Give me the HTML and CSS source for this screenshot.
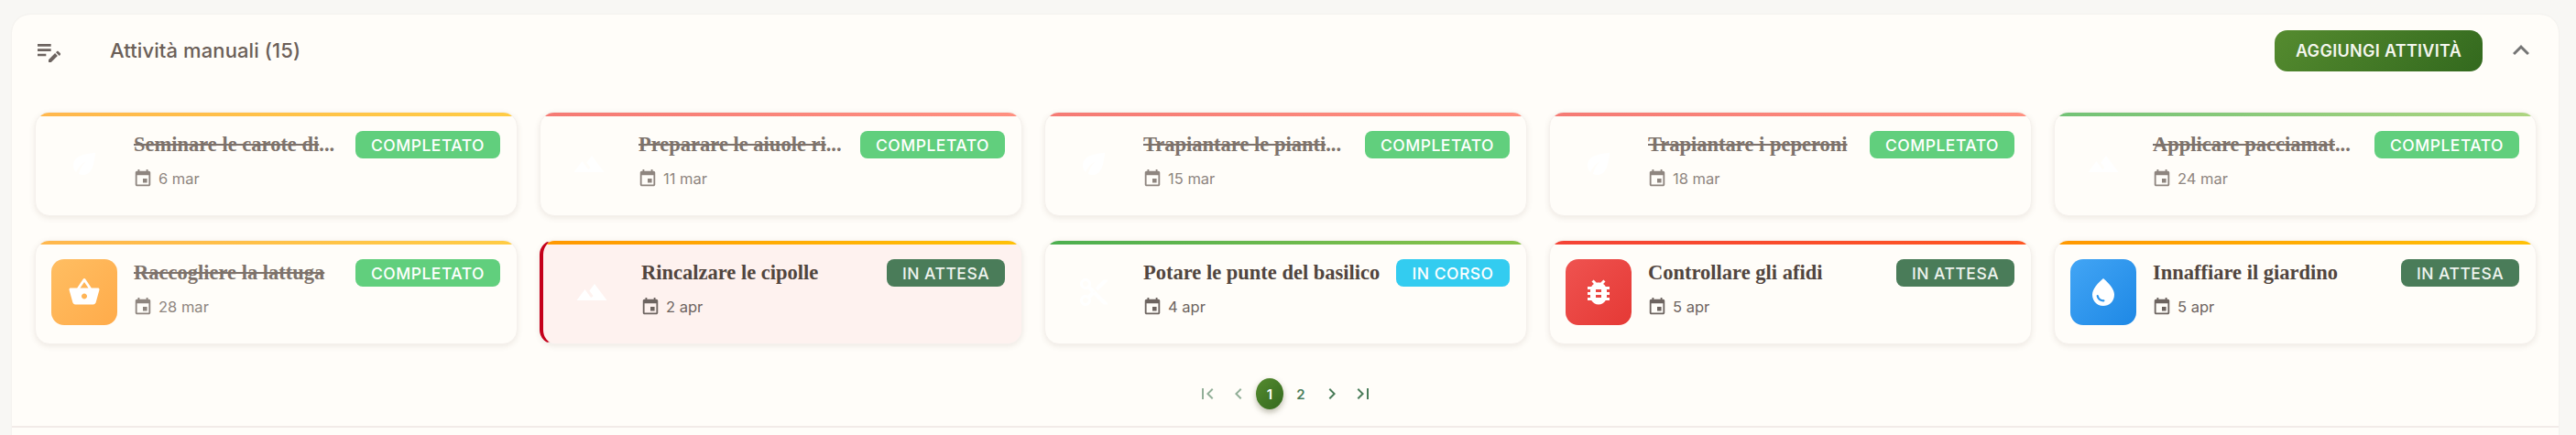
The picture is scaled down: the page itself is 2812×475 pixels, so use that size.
FILE: index.html
```html
<!DOCTYPE html>
<html lang="it">

<head>
    <meta charset="UTF-8">
    <meta name="viewport" content="width=device-width, initial-scale=1.0">
    <title>Attività manuali</title>
    <link rel="stylesheet" href="styles.css">
</head>

<body>
    <!-- icon set, used below with <use> -->
    <svg class="icon-defs" aria-hidden="true">
        <symbol id="i-note" viewBox="0 0 24 24"><path d="M3 10h11v2H3v-2zm0-2h11V6H3v2zm0 8h7v-2H3v2zm15.01-3.13.71-.71c.39-.39 1.02-.39 1.41 0l1.41 1.41c.39.39.39 1.02 0 1.41l-.71.71-2.82-2.82zm-.71.71L12 18.88V21h2.12l5.3-5.3-2.12-2.12z"/></symbol>
        <symbol id="i-less" viewBox="0 0 24 24"><path d="M12 8l-6 6 1.41 1.41L12 10.83l4.59 4.58L18 14z"/></symbol>
        <symbol id="i-event" viewBox="0 0 24 24"><path d="M17 12h-5v5h5v-5zM16 1v2H8V1H6v2H5c-1.11 0-1.99.9-1.99 2L3 19c0 1.1.89 2 2 2h14c1.1 0 2-.9 2-2V5c0-1.1-.9-2-2-2h-1V1h-2zm3 18H5V8h14v11z"/></symbol>
        <symbol id="i-eco" viewBox="0 0 24 24"><path d="M6.05 8.05c-2.73 2.73-2.73 7.15-.02 9.88 1.47-3.4 4.09-6.24 7.36-7.93-2.77 2.34-4.71 5.61-5.39 9.32 2.6 1.23 5.8.78 7.95-1.37C19.43 14.47 20 4 20 4S9.53 4.57 6.05 8.05z"/></symbol>
        <symbol id="i-basket" viewBox="0 0 24 24"><path d="M17.21 9l-4.38-6.56c-.19-.28-.51-.42-.83-.42-.32 0-.64.14-.83.43L6.79 9H2c-.55 0-1 .45-1 1 0 .09.01.18.04.27l2.54 9.27c.23.84 1 1.46 1.92 1.46h13c.92 0 1.69-.62 1.93-1.46l2.54-9.27L23 10c0-.55-.45-1-1-1h-4.79zM9 9l3-4.4L15 9H9zm3 8c-1.1 0-2-.9-2-2s.9-2 2-2 2 .9 2 2-.9 2-2 2z"/></symbol>
        <symbol id="i-mountain" viewBox="0 0 24 24"><path d="M14 6l-3.75 5 2.85 3.8-1.6 1.2C9.81 13.75 7 10 7 10l-6 8h22L14 6z"/></symbol>
        <symbol id="i-cut" viewBox="0 0 24 24"><path d="M9.64 7.64c.23-.5.36-1.05.36-1.64 0-2.21-1.79-4-4-4S2 3.79 2 6s1.79 4 4 4c.59 0 1.14-.13 1.64-.36L10 12l-2.36 2.36C7.14 14.13 6.59 14 6 14c-2.21 0-4 1.79-4 4s1.79 4 4 4 4-1.79 4-4c0-.59-.13-1.14-.36-1.64L12 14l7 7h3v-1L9.64 7.64zM6 8c-1.1 0-2-.89-2-2s.9-2 2-2 2 .89 2 2-.9 2-2 2zm0 12c-1.1 0-2-.89-2-2s.9-2 2-2 2 .89 2 2-.9 2-2 2zm6-7.5c-.28 0-.5-.22-.5-.5s.22-.5.5-.5.5.22.5.5-.22.5-.5.5zM19 3l-6 6 2 2 7-7V3z"/></symbol>
        <symbol id="i-bug" viewBox="0 0 24 24"><path d="M20 8h-2.81c-.45-.78-1.07-1.45-1.82-1.96L17 4.41 15.59 3l-2.17 2.17C12.96 5.06 12.49 5 12 5c-.49 0-.96.06-1.41.17L8.41 3 7 4.41l1.62 1.63C7.88 6.55 7.26 7.22 6.81 8H4v2h2.09c-.05.33-.09.66-.09 1v1H4v2h2v1c0 .34.04.67.09 1H4v2h2.81c1.04 1.79 2.97 3 5.19 3s4.15-1.21 5.19-3H20v-2h-2.09c.05-.33.09-.66.09-1v-1h2v-2h-2v-1c0-.34-.04-.67-.09-1H20V8zm-6 8h-4v-2h4v2zm0-4h-4v-2h4v2z"/></symbol>
        <symbol id="i-drop" viewBox="0 0 24 24"><path d="M12 2c-5.33 4.55-8 8.48-8 11.8 0 4.98 3.8 8.2 8 8.2s8-3.22 8-8.2c0-3.32-2.67-7.25-8-11.8zM7.83 14c.37 0 .67.26.74.62.41 2.22 2.28 2.98 3.64 2.87.43-.02.79.32.79.75 0 .4-.32.73-.72.75-2.13.13-4.62-1.09-5.19-4.12-.08-.45.28-.87.74-.87z"/></symbol>
        <symbol id="i-first" viewBox="0 0 24 24"><path d="M18.41 16.59 13.82 12l4.59-4.59L17 6l-6 6 6 6zM6 6h2v12H6z"/></symbol>
        <symbol id="i-prev" viewBox="0 0 24 24"><path d="M15.41 7.41 14 6l-6 6 6 6 1.41-1.41L10.83 12z"/></symbol>
        <symbol id="i-next" viewBox="0 0 24 24"><path d="M10 6 8.59 7.41 13.17 12l-4.58 4.59L10 18l6-6z"/></symbol>
        <symbol id="i-last" viewBox="0 0 24 24"><path d="M5.59 7.41 10.18 12l-4.59 4.59L7 18l6-6-6-6zM16 6h2v12h-2z"/></symbol>
    </svg>

    <section class="panel">
        <header class="panel-head">
            <svg class="head-icon"><use href="#i-note"/></svg>
            <h2 class="panel-title">Attività manuali (15)</h2>
            <button class="add-btn">AGGIUNGI ATTIVITÀ</button>
            <svg class="collapse-icon"><use href="#i-less"/></svg>
        </header>

        <div class="task-grid">
            <article class="task done">
                <div class="bar bar-amber"></div>
                <div class="task-body">
                    <div class="thumb"><svg><use href="#i-eco"/></svg></div>
                    <div class="task-text">
                        <div class="task-top">
                            <h3 class="task-name">Seminare le carote di<span class="more">...</span></h3>
                            <span class="chip chip-done">COMPLETATO</span>
                        </div>
                        <div class="task-date"><svg><use href="#i-event"/></svg>6 mar</div>
                    </div>
                </div>
            </article>

            <article class="task done">
                <div class="bar bar-red"></div>
                <div class="task-body">
                    <div class="thumb"><svg><use href="#i-mountain"/></svg></div>
                    <div class="task-text">
                        <div class="task-top">
                            <h3 class="task-name">Preparare le aiuole ri<span class="more">...</span></h3>
                            <span class="chip chip-done">COMPLETATO</span>
                        </div>
                        <div class="task-date"><svg><use href="#i-event"/></svg>11 mar</div>
                    </div>
                </div>
            </article>

            <article class="task done">
                <div class="bar bar-red"></div>
                <div class="task-body">
                    <div class="thumb"><svg><use href="#i-eco"/></svg></div>
                    <div class="task-text">
                        <div class="task-top">
                            <h3 class="task-name">Trapiantare le pianti<span class="more">...</span></h3>
                            <span class="chip chip-done">COMPLETATO</span>
                        </div>
                        <div class="task-date"><svg><use href="#i-event"/></svg>15 mar</div>
                    </div>
                </div>
            </article>

            <article class="task done">
                <div class="bar bar-red"></div>
                <div class="task-body">
                    <div class="thumb"><svg><use href="#i-eco"/></svg></div>
                    <div class="task-text">
                        <div class="task-top">
                            <h3 class="task-name">Trapiantare i peperoni</h3>
                            <span class="chip chip-done">COMPLETATO</span>
                        </div>
                        <div class="task-date"><svg><use href="#i-event"/></svg>18 mar</div>
                    </div>
                </div>
            </article>

            <article class="task done">
                <div class="bar bar-green-soft"></div>
                <div class="task-body">
                    <div class="thumb"><svg><use href="#i-mountain"/></svg></div>
                    <div class="task-text">
                        <div class="task-top">
                            <h3 class="task-name">Applicare pacciamat<span class="more">...</span></h3>
                            <span class="chip chip-done">COMPLETATO</span>
                        </div>
                        <div class="task-date"><svg><use href="#i-event"/></svg>24 mar</div>
                    </div>
                </div>
            </article>

            <article class="task done">
                <div class="bar bar-amber"></div>
                <div class="task-body">
                    <div class="thumb thumb-basket"><svg><use href="#i-basket"/></svg></div>
                    <div class="task-text">
                        <div class="task-top">
                            <h3 class="task-name">Raccogliere la lattuga</h3>
                            <span class="chip chip-done">COMPLETATO</span>
                        </div>
                        <div class="task-date"><svg><use href="#i-event"/></svg>28 mar</div>
                    </div>
                </div>
            </article>

            <article class="task urgent">
                <div class="bar bar-orange"></div>
                <div class="task-body">
                    <div class="thumb"><svg><use href="#i-mountain"/></svg></div>
                    <div class="task-text">
                        <div class="task-top">
                            <h3 class="task-name">Rincalzare le cipolle</h3>
                            <span class="chip chip-wait">IN ATTESA</span>
                        </div>
                        <div class="task-date"><svg><use href="#i-event"/></svg>2 apr</div>
                    </div>
                </div>
            </article>

            <article class="task">
                <div class="bar bar-green"></div>
                <div class="task-body">
                    <div class="thumb"><svg><use href="#i-cut"/></svg></div>
                    <div class="task-text">
                        <div class="task-top">
                            <h3 class="task-name">Potare le punte del basilico</h3>
                            <span class="chip chip-run">IN CORSO</span>
                        </div>
                        <div class="task-date"><svg><use href="#i-event"/></svg>4 apr</div>
                    </div>
                </div>
            </article>

            <article class="task">
                <div class="bar bar-fire"></div>
                <div class="task-body">
                    <div class="thumb thumb-bug"><svg><use href="#i-bug"/></svg></div>
                    <div class="task-text">
                        <div class="task-top">
                            <h3 class="task-name">Controllare gli afidi</h3>
                            <span class="chip chip-wait">IN ATTESA</span>
                        </div>
                        <div class="task-date"><svg><use href="#i-event"/></svg>5 apr</div>
                    </div>
                </div>
            </article>

            <article class="task">
                <div class="bar bar-orange"></div>
                <div class="task-body">
                    <div class="thumb thumb-water"><svg><use href="#i-drop"/></svg></div>
                    <div class="task-text">
                        <div class="task-top">
                            <h3 class="task-name">Innaffiare il giardino</h3>
                            <span class="chip chip-wait">IN ATTESA</span>
                        </div>
                        <div class="task-date"><svg><use href="#i-event"/></svg>5 apr</div>
                    </div>
                </div>
            </article>
        </div>

        <nav class="pager">
            <span class="page-arrow off"><svg><use href="#i-first"/></svg></span>
            <span class="page-arrow off"><svg><use href="#i-prev"/></svg></span>
            <span class="page-num current">1</span>
            <span class="page-num">2</span>
            <span class="page-arrow"><svg><use href="#i-next"/></svg></span>
            <span class="page-arrow"><svg><use href="#i-last"/></svg></span>
        </nav>

        <div class="panel-foot"></div>
    </section>
</body>

</html>
```

FILE: styles.css
```css
html, body {
    height: 100%;
}

body {
    margin: 0;
    padding: 16px 19px 0 13px;
    box-sizing: border-box;
    overflow: hidden;
    background-color: #f8f7f4;
    font-family: Inter, "Noto Sans", sans-serif;
}

.icon-defs {
    display: none;
}

.panel {
    background-color: #fffdf9;
    border-radius: 20px 20px 0 0;
    box-shadow: 0 0 2px rgba(120, 100, 90, 0.1);
    height: 100%;
    display: flex;
    flex-direction: column;
}

.panel-head {
    display: flex;
    align-items: center;
    height: 45px;
    padding: 17px 23px 0 24px;
}

.head-icon {
    width: 32px;
    height: 32px;
    fill: #6d6460;
}

.panel-title {
    margin: 0 0 2px 51px;
    flex: 1;
    font-size: 22px;
    font-weight: 500;
    letter-spacing: 0.1px;
    color: #6b5f58;
}

.add-btn {
    width: 227px;
    height: 45px;
    border: none;
    border-radius: 14px;
    background: linear-gradient(135deg, #558b2f, #33691e);
    color: #f4f6ee;
    font-family: inherit;
    font-size: 18px;
    font-weight: 600;
    letter-spacing: 0.3px;
}

.collapse-icon {
    width: 36px;
    height: 36px;
    margin: 0 0 2px 24px;
    fill: #757575;
}

.task-grid {
    display: grid;
    grid-template-columns: repeat(5, 1fr);
    gap: 26px 24px;
    padding: 44px 24px 0 25px;
}

.task {
    height: 114px;
    box-sizing: border-box;
    border-radius: 16px;
    border: 1px solid #f5f1ed;
    background-color: #fffdf9;
    box-shadow: 0 2px 6px rgba(90, 60, 40, 0.1);
    overflow: hidden;
}

.task.urgent {
    background-color: #fef2ef;
    border-left: 4px solid #c4001a;
}

.bar {
    height: 4px;
}

.bar-amber { background: linear-gradient(90deg, #ffb74d, #ffcc44); }
.bar-red { background: linear-gradient(90deg, #f57a74, #ff9080); }
.bar-green-soft { background: linear-gradient(90deg, #72c276, #aed581); }
.bar-orange { background: linear-gradient(90deg, #ff9800, #ffc107); }
.bar-green { background: linear-gradient(90deg, #4caf50, #8bc34a); }
.bar-fire { background: linear-gradient(90deg, #f44336, #ff5722); }

.task-body {
    display: flex;
    gap: 18px;
    padding: 16px 18px 20px 17px;
}

.thumb {
    flex: none;
    width: 72px;
    height: 72px;
    border-radius: 14px;
    display: flex;
    align-items: center;
    justify-content: center;
}

.thumb svg {
    width: 36px;
    height: 36px;
    fill: #fff;
}

.thumb-basket { background: linear-gradient(135deg, #ffbe62, #ffab4a); }
.thumb-bug { background: linear-gradient(135deg, #ef5350, #e53935); }
.thumb-water { background: linear-gradient(135deg, #42a5f5, #1e88e5); }

.task-text {
    flex: 1;
    min-width: 0;
}

.task-top {
    display: flex;
    align-items: center;
    justify-content: space-between;
}

.task-name {
    margin: 0;
    font-family: "Liberation Serif", serif;
    font-size: 22.5px;
    font-weight: 700;
    color: #51453e;
    white-space: nowrap;
}

.done .task-name {
    color: #7d726b;
    text-decoration: line-through;
}

/* dots stay clear of the strike line */
.more {
    display: inline-block;
}

.chip {
    flex: none;
    height: 30px;
    box-sizing: border-box;
    border-radius: 8px;
    display: flex;
    align-items: center;
    justify-content: center;
    color: #fff;
    font-size: 17.5px;
    font-weight: 500;
    letter-spacing: 0.5px;
}

.chip-done {
    background-color: #61cf7d;
    width: 158px;
}

.chip-wait {
    background-color: #4a7c59;
    color: #eef3ee;
    width: 129px;
}

.chip-run {
    background-color: #33ccf0;
    width: 124px;
}

.task-date {
    display: flex;
    align-items: center;
    gap: 6px;
    margin-top: 11px;
    margin-left: -1px;
    font-size: 16.5px;
    color: #6d6460;
}

.done .task-date {
    color: #8e857f;
}

.task-date svg {
    width: 22px;
    height: 22px;
    fill: currentColor;
}

.pager {
    display: flex;
    align-items: center;
    justify-content: center;
    gap: 4px;
    margin-top: 37px;
    height: 34px;
}

.page-arrow {
    width: 30px;
    height: 34px;
    display: flex;
    align-items: center;
    justify-content: center;
}

.page-arrow svg {
    width: 24px;
    height: 24px;
    fill: #4a7c59;
}

.page-arrow.off svg {
    opacity: 0.6;
}

.page-num {
    width: 30px;
    height: 34px;
    display: flex;
    align-items: center;
    justify-content: center;
    font-size: 15px;
    font-weight: 600;
    color: #4a7c59;
}

.page-num.current {
    border-radius: 50%;
    background: linear-gradient(135deg, #558b2f, #33691e);
    box-shadow: 0 3px 6px rgba(60, 60, 30, 0.35);
    color: #fff;
}

.panel-foot {
    margin-top: 18px;
    flex: 1;
    border-top: 2px solid #f2ebe8;
}
```
